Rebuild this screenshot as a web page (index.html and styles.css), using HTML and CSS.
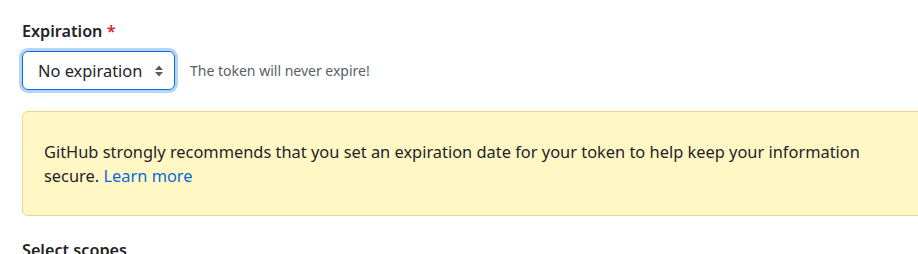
FILE: index.html
```html
<!DOCTYPE html>
<html>
<head>
<meta charset="utf-8">
<link rel="stylesheet" href="styles.css">
</head>
<body>
<div class="page">
  <div class="form-group">
    <label class="label">Expiration <span class="req">*</span></label>
    <div class="row">
      <div class="select">
        <span class="select-text">No expiration</span>
        <svg class="caret" width="8" height="12" viewBox="0 0 8 12"><path d="M4 0.5 L8 5 L0 5 Z M4 11.5 L8 7 L0 7 Z" fill="#555b63"/></svg>
      </div>
      <span class="note">The token will never expire!</span>
    </div>
  </div>
  <div class="flash">
    GitHub strongly recommends that you set an expiration date for your token to help keep your information secure. <a class="link" href="#">Learn more</a>
  </div>
  <h3 class="scopes">Select scopes</h3>
</div>
</body>
</html>
```
FILE: styles.css
```css
html, body {
  margin: 0;
  padding: 0;
  background: #fff;
}
body {
  font-family: "Noto Sans", "Open Sans", sans-serif;
  color: #1f2328;
  overflow: hidden;
}
.page {
  padding: 20px 0 0 22px;
}
.form-group {
  display: flex;
  flex-direction: column;
  gap: 9px;
}
.label {
  font-size: 16.2px;
  font-weight: 600;
  line-height: 22px;
}
.req {
  color: #d1242f;
}
.row {
  display: flex;
  align-items: center;
  gap: 15px;
}
.select {
  box-sizing: border-box;
  width: 153px;
  height: 39px;
  border: 1px solid #0969da;
  border-radius: 6px;
  box-shadow: 0 0 0 3px #b6d4f7;
  display: flex;
  align-items: center;
  justify-content: space-between;
  padding: 0 11px 0 15px;
  font-size: 16.4px;
}
.select-text {
  line-height: 20px;
}
.caret {
  display: block;
}
.note {
  font-size: 14px;
  color: #57606a;
}
.flash {
  box-sizing: border-box;
  margin-top: 21px;
  width: 940px;
  padding: 28px 60px 27px 21px;
  background: #fff8c5;
  border: 1px solid #ead58a;
  border-radius: 6px;
  font-size: 16.4px;
  line-height: 24px;
  color: #1f2328;
}
.link {
  color: #0969da;
  text-decoration: none;
}
.scopes {
  margin: 23px 0 0 0;
  font-size: 16.2px;
  font-weight: 600;
  line-height: 22px;
}
```
